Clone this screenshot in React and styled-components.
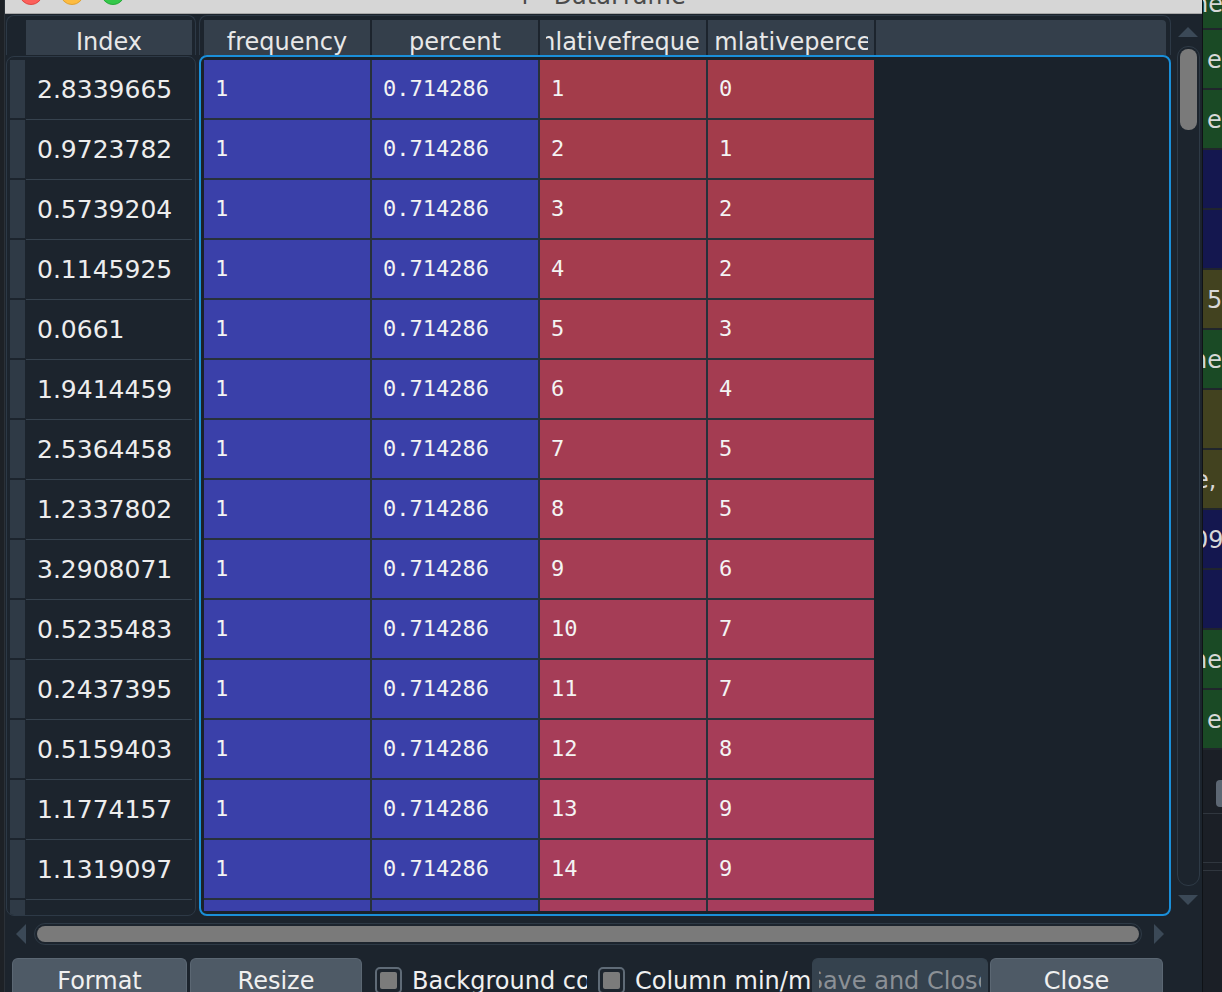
import styled, { createGlobalStyle } from "styled-components";

const GlobalStyle = createGlobalStyle`
  html, body {
    margin: 0;
    padding: 0;
    background: #1d2126;
  }
  body {
    font-family: "DejaVu Sans", "Liberation Sans", sans-serif;
    overflow: hidden;
  }
  * {
    box-sizing: border-box;
  }
`;

const Screen = styled.div`
  display: flex;
  width: 1222px;
  height: 992px;
  overflow: hidden;
`;

const LeftEdge = styled.div`
  width: 5px;
  flex-shrink: 0;
  background: #1d2126;
  border-right: 1px solid #2b3138;
`;

const Window = styled.div`
  width: 1198px;
  flex-shrink: 0;
  display: flex;
  flex-direction: column;
  background: #1c242d;
  border-right: 1px solid #0f1216;
`;

const TitleBar = styled.div`
  height: 14px;
  flex-shrink: 0;
  display: grid;
  grid-template-columns: 1fr auto 1fr;
  align-items: start;
  background: #d6d6d6;
  border-bottom: 1px solid #a8a8a8;
  overflow: hidden;
`;

const Lights = styled.div`
  display: flex;
  gap: 17px;
  padding-left: 14px;
`;

const Light = styled.span`
  width: 24px;
  height: 24px;
  margin-top: -19px;
  border-radius: 50%;
  background: ${(p) => p.$color};
  border: 1px solid ${(p) => p.$edge};
`;

const Title = styled.div`
  font-size: 24px;
  line-height: 28px;
  margin-top: -18px;
  color: #4b4b4b;
  white-space: nowrap;
`;

const Content = styled.div`
  display: grid;
  grid-template-columns: 190px 3px 972px 5px 24px;
  grid-template-rows: 40px 861px;
  padding: 1px 3px 0 1px;
`;

const IndexHeaderBox = styled.div`
  grid-column: 1;
  grid-row: 1;
  display: flex;
  gap: 1px;
  padding: 4px 3px 0 0;
  border: 1px solid #2d3946;
  border-bottom: 0;
  border-radius: 8px 8px 0 0;
`;

const Corner = styled.div`
  width: 18px;
  flex-shrink: 0;
`;

const HeaderBox = styled.div`
  grid-column: 3;
  grid-row: 1;
  display: flex;
  gap: 2px;
  padding: 4px 4px 0 4px;
  border: 1px solid #2d3946;
  border-bottom: 0;
  border-radius: 8px 8px 0 0;
`;

const HeaderCell = styled.div`
  flex: ${(p) => (p.$fill ? "1" : "0 0 166px")};
  min-width: 0;
  height: 35px;
  padding: 5px 6px 0;
  overflow: hidden;
  background: #343f4b;
  border-radius: ${(p) => (p.$fill ? "0 4px 0 0" : "0")};
  color: #e8e8e8;
  font-size: 24px;
  line-height: 35px;
  white-space: nowrap;
`;

const Clip = styled.div`
  height: 100%;
  min-width: 0;
  display: flex;
  justify-content: center;
  overflow: hidden;
`;

const Label = styled.span`
  flex-shrink: 0;
`;

const IndexBody = styled.div`
  grid-column: 1;
  grid-row: 2;
  margin-top: 1px;
  padding: 3px 3px 0 3px;
  border: 1px solid #2d3946;
  border-radius: 8px;
  overflow: hidden;
`;

const IndexRow = styled.div`
  display: flex;
  gap: 1px;
  height: 60px;
  flex-shrink: 0;
`;

const RowStrip = styled.div`
  width: 15px;
  height: 58px;
  background: #2f3a46;
`;

const IndexCell = styled.div`
  width: 166px;
  height: 60px;
  padding-left: 11px;
  border-bottom: 1px solid #36424e;
  color: #ededed;
  font-size: 25px;
  line-height: 59px;
  white-space: nowrap;
`;

const TableFrame = styled.div`
  grid-column: 3;
  grid-row: 2;
  padding: 3px;
  border: 2px solid #1a8fd9;
  border-radius: 8px;
  background: #1a222b;
`;

const Viewport = styled.div`
  height: 100%;
  overflow: hidden;
`;

const DataGrid = styled.div`
  display: grid;
  grid-template-columns: repeat(4, 166px);
  grid-auto-rows: 58px;
  gap: 2px;
  width: max-content;
  background: #27313b;
`;

const DataCell = styled.div`
  background: ${(p) => p.$bg};
  padding-left: 11px;
  color: #f3f3f3;
  font-family: "DejaVu Sans Mono", "Liberation Mono", monospace;
  font-size: 22px;
  line-height: 58px;
`;

const VScroll = styled.div`
  grid-column: 5;
  grid-row: 1 / 3;
  display: flex;
  flex-direction: column;
  align-items: center;
  padding: 12px 0 11px;
`;

const ArrowUp = styled.div`
  width: 0;
  height: 0;
  border-left: 10px solid transparent;
  border-right: 10px solid transparent;
  border-bottom: 10px solid #3b4957;
`;

const ArrowDown = styled.div`
  width: 0;
  height: 0;
  border-left: 10px solid transparent;
  border-right: 10px solid transparent;
  border-top: 10px solid #3b4957;
`;

const VTrack = styled.div`
  flex: 1;
  width: 23px;
  margin: 9px 0;
  padding: 2px;
  border: 1px solid #2e3a46;
  border-radius: 11px;
`;

const VThumb = styled.div`
  height: 81px;
  border-radius: 8px;
  background: #7a7a7a;
`;

const HScroll = styled.div`
  height: 34px;
  display: flex;
  align-items: center;
  padding-top: 7px;
  padding-bottom: 5px;
`;

const ArrowLeft = styled.div`
  width: 0;
  height: 0;
  margin-left: 11px;
  border-top: 10px solid transparent;
  border-bottom: 10px solid transparent;
  border-right: 10px solid #3b4957;
`;

const ArrowRight = styled.div`
  width: 0;
  height: 0;
  margin-left: 12px;
  border-top: 10px solid transparent;
  border-bottom: 10px solid transparent;
  border-left: 10px solid #3b4957;
`;

const HTrack = styled.div`
  width: 1108px;
  height: 22px;
  margin-left: 8px;
  padding: 2px;
  border: 1px solid #2e3a46;
  border-radius: 11px;
`;

const HThumb = styled.div`
  height: 100%;
  border-radius: 8px;
  background: #7a7a7a;
`;

const ButtonRow = styled.div`
  display: flex;
  align-items: flex-start;
  margin-top: 8px;
  padding-left: 7px;
`;

const Button = styled.div`
  flex: 0 0 ${(p) => p.$w}px;
  min-width: 0;
  margin-left: ${(p) => p.$gap || 0}px;
  height: 44px;
  padding: 8px ${(p) => (p.$disabled ? 6 : 4)}px 0;
  overflow: hidden;
  background: ${(p) => (p.$disabled ? "#35424e" : "#4e5a66")};
  border: 1px solid ${(p) => (p.$disabled ? "#35424e" : "#5b6773")};
  border-bottom: 0;
  border-radius: 6px 6px 0 0;
  color: ${(p) => (p.$disabled ? "#8b9096" : "#f0f0f0")};
  font-size: 24px;
  line-height: 28px;
  white-space: nowrap;
`;

const CheckItem = styled.div`
  flex: 0 0 ${(p) => p.$w}px;
  min-width: 0;
  margin-left: ${(p) => p.$gap}px;
  margin-right: ${(p) => p.$after || 0}px;
  margin-top: 9px;
  display: flex;
  gap: 10px;
  overflow: hidden;
  white-space: nowrap;
`;

const CheckBox = styled.div`
  flex: 0 0 27px;
  height: 27px;
  padding: 3px;
  border: 2px solid #5f6b77;
  border-radius: 5px;
`;

const CheckFill = styled.div`
  height: 100%;
  border-radius: 2px;
  background: #7b7b7b;
`;

const CheckLabel = styled.span`
  color: #f0f0f0;
  font-size: 24px;
  line-height: 28px;
`;

const OtherApp = styled.div`
  flex: 1;
  display: flex;
  flex-direction: column;
  background: #1b1f26;
  overflow: hidden;
`;

const OtherCell = styled.div`
  height: ${(p) => p.$h}px;
  flex-shrink: 0;
  text-indent: ${(p) => p.$indent}px;
  background: ${(p) => p.$bg};
  border-bottom: 2px solid #20252c;
  color: #d8d8d8;
  font-size: 24px;
  line-height: ${(p) => (p.$top ? 8 : p.$h)}px;
  white-space: nowrap;
  overflow: hidden;
`;

const OtherLower = styled.div`
  display: flex;
  flex-direction: column;
  align-items: flex-end;
  padding-top: 30px;
`;

const OtherTab = styled.div`
  width: 6px;
  height: 27px;
  border-radius: 4px 0 0 4px;
  background: #5d6773;
`;

const OtherLine = styled.div`
  width: 100%;
  height: 1px;
  margin-top: ${(p) => p.$mt}px;
  background: #30363e;
`;

const indexValues = [
  "2.8339665",
  "0.9723782",
  "0.5739204",
  "0.1145925",
  "0.0661",
  "1.9414459",
  "2.5364458",
  "1.2337802",
  "3.2908071",
  "0.5235483",
  "0.2437395",
  "0.5159403",
  "1.1774157",
  "1.1319097",
  "",
];

const cumPercent = [0, 1, 2, 2, 3, 4, 5, 5, 6, 7, 7, 8, 9, 9];

const BLUE = "#3a40a9";

function redFor(i) {
  const t = Math.min(i / 13, 1.08);
  const r = Math.round(163 + 3 * t);
  const g = Math.round(60 + 1 * t);
  const b = Math.round(74 + 17 * t);
  return `rgb(${r}, ${g}, ${b})`;
}

const green = "#1a4a25";
const navy = "#14174f";
const olive = "#42421f";

const otherCells = [
  { h: 30, bg: green, text: "ne", indent: -10, top: true },
  { h: 60, bg: green, text: "e", indent: 4 },
  { h: 60, bg: green, text: "e", indent: 4 },
  { h: 60, bg: navy, text: "", indent: 4 },
  { h: 60, bg: navy, text: "", indent: 4 },
  { h: 60, bg: olive, text: "5", indent: 4 },
  { h: 60, bg: green, text: "ne", indent: -11 },
  { h: 60, bg: olive, text: "", indent: 4 },
  { h: 60, bg: olive, text: "e,", indent: -9 },
  { h: 60, bg: navy, text: "09", indent: -10 },
  { h: 60, bg: navy, text: "", indent: 4 },
  { h: 60, bg: green, text: "ne", indent: -11 },
  { h: 60, bg: green, text: "e", indent: 4 },
];

const headers = ["frequency", "percent", "cumlativefrequency", "cumlativepercent"];

export default function App() {
  const rows = indexValues.map((v, i) => ({
    freq: i < 14 ? "1" : "",
    percent: i < 14 ? "0.714286" : "",
    cumFreq: i < 14 ? String(i + 1) : "",
    cumPerc: i < 14 ? String(cumPercent[i]) : "",
    red: redFor(i),
  }));

  return (
    <>
      <GlobalStyle />
      <Screen>
        <LeftEdge />
        <Window>
          <TitleBar>
            <Lights>
              <Light $color="#fc605b" $edge="#de4a44" />
              <Light $color="#fdbc40" $edge="#dea236" />
              <Light $color="#34c84a" $edge="#27a93a" />
            </Lights>
            <Title>f - DataFrame</Title>
            <div />
          </TitleBar>

          <Content>
            <IndexHeaderBox>
              <Corner />
              <HeaderCell>
                <Clip>
                  <Label>Index</Label>
                </Clip>
              </HeaderCell>
            </IndexHeaderBox>

            <HeaderBox>
              {headers.map((h) => (
                <HeaderCell key={h}>
                  <Clip>
                    <Label>{h}</Label>
                  </Clip>
                </HeaderCell>
              ))}
              <HeaderCell $fill />
            </HeaderBox>

            <IndexBody>
              {indexValues.map((v, i) => (
                <IndexRow key={i}>
                  <RowStrip />
                  <IndexCell>{v}</IndexCell>
                </IndexRow>
              ))}
            </IndexBody>

            <TableFrame>
              <Viewport>
                <DataGrid>
                  {rows.map((r, i) => [
                    <DataCell key={`f${i}`} $bg={BLUE}>
                      {r.freq}
                    </DataCell>,
                    <DataCell key={`p${i}`} $bg={BLUE}>
                      {r.percent}
                    </DataCell>,
                    <DataCell key={`cf${i}`} $bg={r.red}>
                      {r.cumFreq}
                    </DataCell>,
                    <DataCell key={`cp${i}`} $bg={r.red}>
                      {r.cumPerc}
                    </DataCell>,
                  ])}
                </DataGrid>
              </Viewport>
            </TableFrame>

            <VScroll>
              <ArrowUp />
              <VTrack>
                <VThumb />
              </VTrack>
              <ArrowDown />
            </VScroll>
          </Content>

          <HScroll>
            <ArrowLeft />
            <HTrack>
              <HThumb />
            </HTrack>
            <ArrowRight />
          </HScroll>

          <ButtonRow>
            <Button $w={175}>
              <Clip>
                <Label>Format</Label>
              </Clip>
            </Button>
            <Button $w={172} $gap={3}>
              <Clip>
                <Label>Resize</Label>
              </Clip>
            </Button>
            <CheckItem $w={212} $gap={13} $after={11}>
              <CheckBox>
                <CheckFill />
              </CheckBox>
              <CheckLabel>Background color</CheckLabel>
            </CheckItem>
            <CheckItem $w={214} $gap={0}>
              <CheckBox>
                <CheckFill />
              </CheckBox>
              <CheckLabel>Column min/max</CheckLabel>
            </CheckItem>
            <Button $w={176} $disabled>
              <Clip>
                <Label>Save and Close</Label>
              </Clip>
            </Button>
            <Button $w={173} $gap={2}>
              <Clip>
                <Label>Close</Label>
              </Clip>
            </Button>
          </ButtonRow>
        </Window>

        <OtherApp>
          {otherCells.map((c, i) => (
            <OtherCell key={i} $h={c.h} $bg={c.bg} $indent={c.indent} $top={c.top}>
              {c.text}
            </OtherCell>
          ))}
          <OtherLower>
            <OtherTab />
            <OtherLine $mt={6} />
            <OtherLine $mt={48} />
            <OtherLine $mt={7} />
          </OtherLower>
        </OtherApp>
      </Screen>
    </>
  );
}
